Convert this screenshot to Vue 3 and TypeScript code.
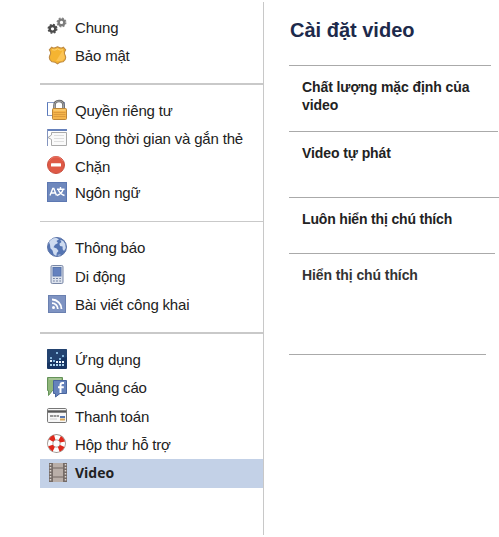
<script setup lang="ts">
interface Item {
  id: string
  label: string
  active?: boolean
}
interface Group {
  id: string
  items: Item[]
}

const groups: Group[] = [
  { id: 'account', items: [{ id: 'general', label: 'Chung' }, { id: 'security', label: 'Bảo mật' }] },
  {
    id: 'privacy',
    items: [
      { id: 'lock', label: 'Quyền riêng tư' },
      { id: 'timeline', label: 'Dòng thời gian và gắn thẻ' },
      { id: 'block', label: 'Chặn' },
      { id: 'language', label: 'Ngôn ngữ' },
    ],
  },
  {
    id: 'notify',
    items: [
      { id: 'globe', label: 'Thông báo' },
      { id: 'mobile', label: 'Di động' },
      { id: 'posts', label: 'Bài viết công khai' },
    ],
  },
  {
    id: 'tools',
    items: [
      { id: 'apps', label: 'Ứng dụng' },
      { id: 'ads', label: 'Quảng cáo' },
      { id: 'payments', label: 'Thanh toán' },
      { id: 'support', label: 'Hộp thư hỗ trợ' },
      { id: 'video', label: 'Video', active: true },
    ],
  },
]

const settings = [
  { id: 'quality', label: 'Chất lượng mặc định của video' },
  { id: 'autoplay', label: 'Video tự phát' },
  { id: 'always', label: 'Luôn hiển thị chú thích' },
  { id: 'captions', label: 'Hiển thị chú thích' },
]
</script>

<template>
  <div class="page">
    <nav class="sidebar">
      <ul v-for="g in groups" :key="g.id" class="group" :class="g.id">
        <li v-for="it in g.items" :key="it.id" class="item" :class="[{ active: it.active }, 'item-' + it.id]">
          <svg class="icon" width="20" height="28" viewBox="0 0 20 28" aria-hidden="true">
            <g v-if="it.id === 'general'" fill="none">
              <circle cx="5.5" cy="14.8" r="4.3" stroke="#505050" stroke-width="1.4" stroke-dasharray="1.9 1.477" />
              <circle cx="5.5" cy="14.8" r="2.8" stroke="#4b4b4b" stroke-width="2.4" />
              <circle cx="14.5" cy="8.4" r="4.3" stroke="#8a8a8a" stroke-width="1.4" stroke-dasharray="1.9 1.477" />
              <circle cx="14.5" cy="8.4" r="2.8" stroke="#7c7c7c" stroke-width="2.3" />
            </g>
            <g v-else-if="it.id === 'security'">
              <path d="M4.6 5.2 Q7 7 10.5 4.8 Q14 7 16.4 5.2 L18.6 7.8 Q16.5 10.5 18 13 Q20 17.3 16 19.8 Q12.5 19.8 10.5 21.8 Q8.5 19.8 5 19.8 Q1 17.3 3 13 Q4.5 10.5 2.4 7.8Z" fill="#f5b431" stroke="#be8b45" stroke-width="1.1" />
              <path d="M16 8 L17 12 L18 16 L15 19 L9 19Z" fill="#ffcd69" opacity=".65" />
              <path d="M5 7.7 Q8 9 10.5 6.8 Q13 9 16 7.7" fill="none" stroke="#ffd477" />
            </g>
            <g v-else-if="it.id === 'lock'">
              <rect x=".5" y="5.5" width="17" height="13" fill="#fff" stroke="#8b9dc8" />
              <path d="M.5 5.5V18.5" stroke="#597abd" />
              <path d="M7.5 13V8.5Q7.5 4 12 4Q16.5 4 16.5 8.5V13" fill="#fff" stroke="#686868" stroke-width="2.6" />
              <path d="M7.5 12V8.8Q7.5 4.1 12 4.1Q16.5 4.1 16.5 8.8V12" fill="none" stroke="#b7b7b7" stroke-width=".8" />
              <rect x="5.5" y="11.5" width="14" height="11" rx="1" fill="#f5b54b" stroke="#bd8637" />
              <path d="M6.5 13H18.5" stroke="#ffdc8d" />
              <path d="M6.5 15.5H18.5M6.5 17.5H18.5M6.5 19.5H18.5" stroke="#d7943a" stroke-width=".8" />
            </g>
            <g v-else-if="it.id === 'timeline'">
              <path d="M0 4H20V6H0Z" fill="#6681bb" />
              <path d="M.5 4V21" stroke="#8495bf" />
              <path d="M4.5 7.5H19.5V20.5H4.5V14.5L1 12.5L4.5 10Z" fill="#fafafa" stroke="#aaa" />
              <path d="M7 10.5H17M7 13.5H17M7 16.5H17" stroke="#dedede" />
            </g>
            <g v-else-if="it.id === 'block'">
              <circle cx="9" cy="12" r="8.5" fill="#df5946" stroke="#c84f3f" />
              <path d="M2.3 8A7.5 7.5 0 0 1 15.7 8" fill="none" stroke="#ed7868" />
              <rect x="4" y="10.3" width="10" height="3.2" rx=".5" fill="#fff" />
            </g>
            <g v-else-if="it.id === 'language'">
              <rect x=".5" y="2.5" width="19" height="19" fill="#6e88bd" stroke="#5d78b2" />
              <g fill="none" stroke="#fff" stroke-width="1.4">
                <path d="M3 15.5L5.8 8.5H6.8L9.5 15.5M4.3 13H8.5" />
                <path d="M10 9.3H17.5M13.5 7V9.3M11.2 9.5Q13 14 17.5 15.5M16 9.5Q15 13.5 10 15.5" />
              </g>
            </g>
            <g v-else-if="it.id === 'globe'">
              <circle cx="10" cy="13" r="9.5" fill="#5474b2" stroke="#5d75a8" />
              <path d="M2 8Q5 3.5 9.5 4L12 5.3L9.5 7L11 9L8 10.8L6.5 13.2L9.7 14.5L11.5 17L9.8 19L9.3 22L6.6 20.2L5.5 16.5L3.4 14.3L3 10.8Z" fill="#cedbf0" />
              <path d="M13.2 5.7L16.3 7L18.2 10L18.8 14L17 17L15.6 15.2V12.6L13 12L12.4 9.8L14.5 8Z" fill="#cedbf0" />
              <path d="M10 21L14 20L12 22Z" fill="#aabddd" />
            </g>
            <g v-else-if="it.id === 'mobile'">
              <rect x="4" y="3.5" width="12" height="18" rx="1.3" fill="#dce2ed" stroke="#7886a5" />
              <rect x="6" y="5.5" width="8" height="8.5" fill="#6481bf" stroke="#5875ab" />
              <path d="M6 16.5H7.8M9 16.5H11M12.3 16.5H14M6 19H7.8M9 19H11M12.3 19H14" stroke="#7483a3" stroke-width="1.2" />
            </g>
            <g v-else-if="it.id === 'posts'">
              <rect x="1.5" y="4.5" width="17" height="17" fill="#7e93c2" stroke="#6a80b0" />
              <circle cx="6.5" cy="16.5" r="1.5" fill="#fff" />
              <path d="M5 12.2A5.8 5.8 0 0 1 10.8 18M5 8.5A9.5 9.5 0 0 1 14.5 18" fill="none" stroke="#fff" stroke-width="1.8" />
            </g>
            <g v-else-if="it.id === 'apps'">
              <rect y="3" width="20" height="20" rx="1" fill="#173563" />
              <path d="M0 3H20V11L0 17Z" fill="#2b4d79" opacity=".6" />
              <path d="M9 6h2v2H9zM15 9h2v2h-2zM3 11h2v2H3zM6 14h2v2H6zM12 12h2v2h-2z" fill="#83b6dc" />
              <path d="M3 14h2v2H3zM9 15h2v2H9zM12 15h2v2h-2zM15 15h2v2h-2z" fill="#eef8ff" />
              <path d="M3 18h2v2H3zM6 18h2v2H6zM9 18h2v2H9zM12 18h2v2h-2zM15 18h2v2h-2z" fill="#a9d2ed" />
            </g>
            <g v-else-if="it.id === 'ads'">
              <path d="M.5 3.5H15.5V16.5H5.5L1.5 21.5V16.5H.5Z" fill="#8fb679" stroke="#65935a" />
              <path d="M2 5H14" stroke="#bbd3af" />
              <path d="M6.5 6.5H19.5V19.5H13L8.5 23V19.5H6.5Z" fill="#6582bb" stroke="#48659d" />
              <path d="M17 9H15.5Q13.5 9 13.5 11.2V19M11 13.2H16.8" fill="none" stroke="#fff" stroke-width="2" />
            </g>
            <g v-else-if="it.id === 'payments'">
              <rect x=".5" y="6.5" width="19" height="14" rx="1.2" fill="#f7f7f7" stroke="#777" />
              <path d="M1 9.5H19" stroke="#555" stroke-width="2.4" />
              <path d="M3 14H12" stroke="#777" stroke-dasharray="3 .5" stroke-width="1.5" />
              <path d="M3 17H10" stroke="#ccc" />
              <path d="M13 15H18" stroke="#5877b1" stroke-width="2" />
              <path d="M13 17.5H18" stroke="#dba651" stroke-width="2" />
            </g>
            <g v-else-if="it.id === 'support'" fill="none">
              <circle cx="9.5" cy="12.5" r="6.3" stroke="#99908a" stroke-width="6.2" />
              <circle cx="9.5" cy="12.5" r="6.3" stroke="#fff" stroke-width="4.6" />
              <circle cx="9.5" cy="12.5" r="6.3" stroke="#e0281b" stroke-width="4.9" stroke-dasharray="4.7 5.196" stroke-dashoffset="-2.6" />
            </g>
            <g v-else>
              <path d="M2 4H20V23H2Z" fill="#b5a9a3" />
              <path d="M3.5 4V23M18.5 4V23" stroke="#756b67" stroke-width="3" />
              <path d="M3.5 5V23M18.5 5V23" stroke="#ddd6d0" stroke-width="1.5" stroke-dasharray="1.5 1.5" />
              <path d="M5.5 4V23M16.5 4V23M5 9H17M5 18H17" stroke="#776d69" />
              <path d="M6 4H16V8H6ZM6 10H16V17H6ZM6 19H16V23H6Z" fill="#b9aea8" />
            </g>
          </svg>
          <span class="label">{{ it.label }}</span>
        </li>
      </ul>
    </nav>
    <main class="content">
      <h1 class="title">Cài đặt video</h1>
      <section v-for="s in settings" :key="s.id" class="setting" :class="s.id">
        <h2 class="name">{{ s.label }}</h2>
      </section>
      <hr class="end" />
    </main>
  </div>
</template>

<style>
body {
  background: #fff;
  overflow: hidden;
}
</style>

<style scoped>
.page {
  display: flex;
  box-sizing: border-box;
  width: 499px;
  height: 537px;
  padding: 2px 0 2px 40px;
  font-family: "Liberation Sans", Arial, sans-serif;
  color: #222;
}
.sidebar {
  box-sizing: border-box;
  width: 224px;
  flex: none;
  padding-top: 12px;
  border-right: 1px solid #c8c8c8;
}
.group {
  display: grid;
  margin: 0;
  padding: 0;
  list-style: none;
}
.account {
  grid-template-rows: 28px 28px;
  padding-bottom: 13px;
  border-bottom: 2px solid #c9c9c9;
}
.privacy {
  grid-template-rows: 28px 28px 27px 26px;
  padding: 12px 0 15px;
  border-bottom: 1px solid #c9c9c9;
}
.notify {
  grid-template-rows: 28px 29px 28px;
  padding: 12px 0 13px;
  border-bottom: 2px solid #c9c9c9;
}
.tools {
  grid-template-rows: 28px 28px 29px 28px 29px;
  padding-top: 12px;
}
.item {
  display: flex;
  align-items: flex-start;
  gap: 8px;
  padding-left: 7px;
  font-size: 15px;
  line-height: 28px;
  letter-spacing: -0.18px;
  white-space: nowrap;
}
.item-language {
  line-height: 26px;
}
.item-mobile,
.item-payments {
  line-height: 30px;
}
.icon {
  flex: none;
  display: block;
}
.active {
  background: #c3d1e7;
}
.active .label {
  font-family: "Open Sans", sans-serif;
  font-size: 14px;
  font-weight: 700;
  letter-spacing: 0;
}
.content {
  flex: 1;
  padding-left: 25px;
}
.title {
  margin: 0;
  height: 63px;
  padding-left: 1px;
  font-size: 20px;
  line-height: 56px;
  color: #1d2a4b;
  white-space: nowrap;
}
.setting {
  box-sizing: border-box;
  padding: 12px 0 0 13px;
  border-top: 1px solid #aaa;
}
.name {
  margin: 0;
  font-size: 14px;
  line-height: 18px;
  letter-spacing: -0.09px;
}
.quality {
  width: 202px;
  height: 66px;
}
.autoplay {
  width: 209px;
  height: 66px;
}
.always {
  width: 210px;
  height: 56px;
}
.always .name {
  letter-spacing: -0.17px;
}
.captions {
  width: 206px;
  height: 101px;
  color: #333;
}
.end {
  width: 197px;
  height: 1px;
  margin: 0;
  border: 0;
  background: #aaa;
}
</style>
